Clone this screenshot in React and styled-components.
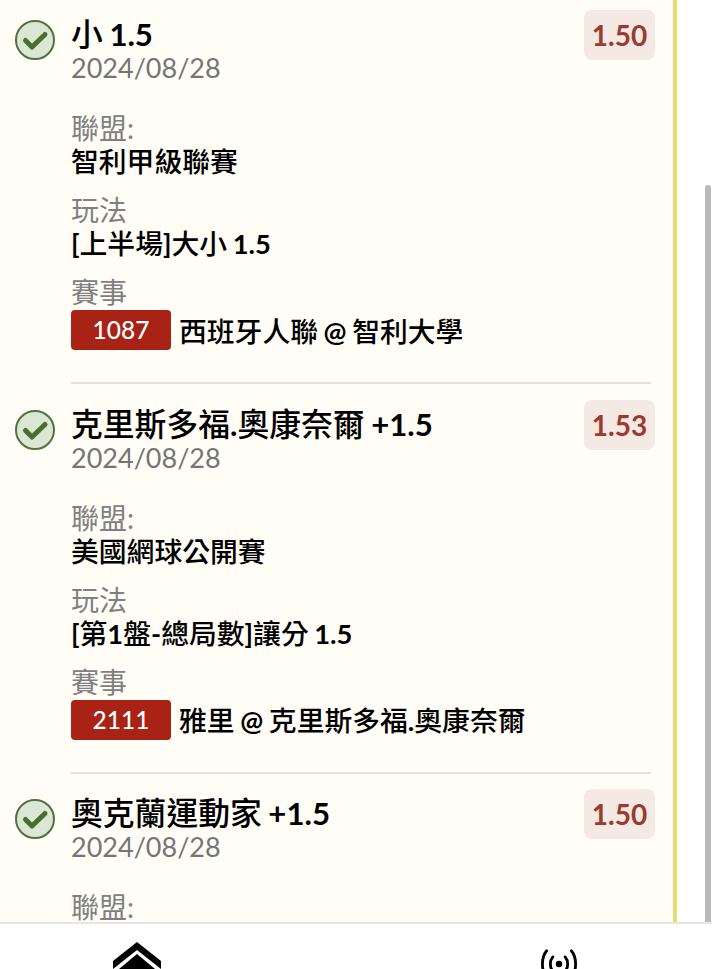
import React from 'react';
import styled, { createGlobalStyle } from 'styled-components';

const bets = [
  {
    title: '小 1.5',
    date: '2024/08/28',
    odds: '1.50',
    league: '智利甲級聯賽',
    play: '[上半場]大小 1.5',
    code: '1087',
    match: '西班牙人聯 @ 智利大學'
  },
  {
    title: '克里斯多福.奧康奈爾 +1.5',
    date: '2024/08/28',
    odds: '1.53',
    league: '美國網球公開賽',
    play: '[第1盤-總局數]讓分 1.5',
    code: '2111',
    match: '雅里 @ 克里斯多福.奧康奈爾'
  },
  {
    title: '奧克蘭運動家 +1.5',
    date: '2024/08/28',
    odds: '1.50',
    league: '',
    play: '',
    code: '',
    match: ''
  }
];

// Latin runs are heavier than the CJK ones in these strings
const MixedText = ({ children }) =>
  children
    .split(/([\x20-\x7e]+)/)
    .map((part, i) => (i % 2 ? <Latin key={i}>{part}</Latin> : part));

const CheckIcon = () => (
  <svg width="42" height="42" viewBox="0 0 42 42">
    <circle cx="21" cy="21" r="19" fill="#dce6d4" stroke="#4f7340" strokeWidth="2" />
    <path
      d="M11.5 21.5 L18 28 L31 15.5"
      fill="none"
      stroke="#47702f"
      strokeWidth="5"
      strokeLinecap="round"
      strokeLinejoin="round"
    />
  </svg>
);

const HomeIcon = () => (
  <svg width="48" height="48" viewBox="0 0 48 48">
    <path d="M24 0 L48 19 V27 L24 8 L0 27 V19 Z" fill="#000" />
    <path d="M24 12 L42 27 V48 H6 V27 Z" fill="#000" />
  </svg>
);

const LiveIcon = () => (
  <svg width="36" height="36" viewBox="0 0 38 38">
    <circle cx="19" cy="19" r="3.4" fill="#000" />
    <g fill="none" stroke="#000" strokeWidth="3" strokeLinecap="round">
      <path d="M12.5 11.5 C9 15.5 9 22.5 12.5 26.5" />
      <path d="M25.5 11.5 C29 15.5 29 22.5 25.5 26.5" />
      <path d="M6 5 C0 12 0 26 6 33" />
      <path d="M32 5 C38 12 38 26 32 33" />
    </g>
  </svg>
);

export default function App() {
  return (
    <Page>
      <GlobalStyle />
      <Scroller>
        <Panel>
          {bets.map(bet => (
            <BetRow key={bet.title}>
              <CheckCell>
                <CheckIcon />
              </CheckCell>
              <BetBody>
                <BetHead>
                  <div>
                    <BetTitle>
                      <MixedText>{bet.title}</MixedText>
                    </BetTitle>
                    <BetDate>{bet.date}</BetDate>
                  </div>
                  <Odds>{bet.odds}</Odds>
                </BetHead>
                <Field>
                  <FieldLabel>聯盟:</FieldLabel>
                  <FieldValue>
                    <MixedText>{bet.league}</MixedText>
                  </FieldValue>
                </Field>
                <Field>
                  <FieldLabel>玩法</FieldLabel>
                  <FieldValue>
                    <MixedText>{bet.play}</MixedText>
                  </FieldValue>
                </Field>
                <Field>
                  <FieldLabel>賽事</FieldLabel>
                  <MatchLine>
                    <MatchCode>{bet.code}</MatchCode>
                    <MatchName>
                      <MixedText>{bet.match}</MixedText>
                    </MatchName>
                  </MatchLine>
                </Field>
                <Divider />
              </BetBody>
            </BetRow>
          ))}
        </Panel>
        <ScrollThumb />
      </Scroller>
      <BottomNav>
        <NavItem>
          <HomeIcon />
        </NavItem>
        <NavItem $drop={4}>
          <LiveIcon />
        </NavItem>
      </BottomNav>
    </Page>
  );
}

const GlobalStyle = createGlobalStyle`
  html,
  body {
    margin: 0;
    height: 100%;
    overflow: hidden;
    background: #fff;
  }

  body {
    font-family: Lato, 'Noto Sans CJK TC', sans-serif;
  }
`;

const Page = styled.div`
  display: flex;
  flex-direction: column;
  width: 712px;
  height: 969px;
  overflow: hidden;
`;

const Scroller = styled.div`
  position: relative;
  flex: 0 0 922px;
  overflow: hidden;
`;

const Panel = styled.div`
  box-sizing: border-box;
  width: 677px;
  min-height: 100%;
  padding-top: 10px;
  background: #fffdf6;
  border-right: 4px solid #e8db74;
`;

const ScrollThumb = styled.div`
  position: absolute;
  top: 185px;
  right: 1px;
  bottom: 0;
  width: 6px;
  border-radius: 3px 3px 0 0;
  background: #b9b9b9;
`;

const BetRow = styled.div`
  display: grid;
  grid-template-columns: 71px 1fr;
  padding-right: 22px;
  height: 389.5px;
`;

const CheckCell = styled.div`
  padding: 9px 0 0 14px;
`;

const BetBody = styled.div`
  display: flex;
  flex-direction: column;
`;

const BetHead = styled.div`
  display: flex;
  justify-content: space-between;
  align-items: flex-start;
  margin-bottom: 28px;
`;

const Latin = styled.span`
  font-weight: 700;
  font-size: 0.98em;
  line-height: 1;
  word-spacing: -1px;
`;

const BetTitle = styled.div`
  margin-top: 5px;
  font-size: 31.8px;
  line-height: 38px;
  font-weight: 500;
  color: #000;
`;

const BetDate = styled.div`
  font-size: 27px;
  line-height: 30px;
  color: #757575;
`;

const Odds = styled.div`
  flex: none;
  width: 71px;
  height: 50px;
  margin-right: -4px;
  border-radius: 8px;
  background: #f5e9e4;
  color: #9b3a2e;
  font-size: 28px;
  font-weight: 700;
  line-height: 50px;
  text-align: center;
`;

const Field = styled.div`
  margin-bottom: 15px;
`;

const FieldLabel = styled.div`
  font-size: 28px;
  line-height: 35px;
  color: #808080;
`;

const FieldValue = styled.div`
  font-size: 27.8px;
  line-height: 32px;
  font-weight: 500;
  color: #000;
`;

const MatchLine = styled.div`
  display: flex;
  align-items: center;
  gap: 8px;
`;

const MatchName = styled(FieldValue)`
  padding-top: 3px;
`;

const MatchCode = styled.div`
  width: 100px;
  height: 40px;
  border-radius: 4px;
  background: #a82315;
  color: #fff;
  font-size: 24.5px;
  font-weight: 500;
  line-height: 40px;
  text-align: center;
`;

const Divider = styled.div`
  height: 2px;
  margin-top: 17px;
  background: #e4e2db;
`;

const BottomNav = styled.nav`
  flex: 1;
  display: flex;
  justify-content: space-between;
  padding: 18px 135px 0 113px;
  border-top: 2px solid #e6e6e6;
  background: #fff;
  overflow: hidden;
`;

const NavItem = styled.div`
  display: flex;
  align-items: flex-start;
  margin-top: ${p => p.$drop || 0}px;
`;
